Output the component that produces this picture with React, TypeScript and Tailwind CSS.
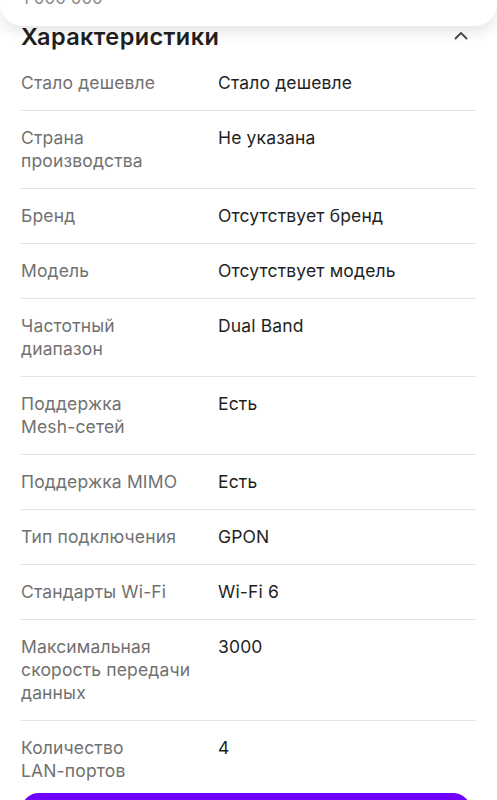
import React from "react"

const rows: [string[], string][] = [
  [["Стало дешевле"], "Стало дешевле"],
  [["Страна", "производства"], "Не указана"],
  [["Бренд"], "Отсутствует бренд"],
  [["Модель"], "Отсутствует модель"],
  [["Частотный", "диапазон"], "Dual Band"],
  [["Поддержка", "Mesh-сетей"], "Есть"],
  [["Поддержка MIMO"], "Есть"],
  [["Тип подключения"], "GPON"],
  [["Стандарты Wi-Fi"], "Wi-Fi 6"],
  [["Максимальная", "скорость передачи", "данных"], "3000"],
  [["Количество", "LAN-портов"], "4"],
]

function Chevron() {
  return (
    <svg width="14" height="9" viewBox="0 0 14 9" fill="none">
      <path d="M1.5 7.5L7 2l5.5 5.5" stroke="#4a4a4a" strokeWidth="1.8" strokeLinecap="round" strokeLinejoin="round" />
    </svg>
  )
}

export default function App() {
  return (
    <div className="w-[497px] h-[800px] overflow-hidden bg-white text-[#1f1f1f]" style={{ fontFamily: "Inter, 'Noto Sans', sans-serif" }}>
      {/* верхняя карточка, почти вся ушла за край */}
      <div className="h-[26px] rounded-b-[22px] bg-white shadow-[0_6px_14px_rgba(0,0,0,0.10)] overflow-hidden relative z-10">
        <div className="-mt-[12px] pl-[22px] text-[17px] leading-[20px] text-[#8a8a8a]">1 000 000</div>
      </div>

      <div className="px-[21px]">
        <div className="flex items-center justify-between h-[30px]">
          <h2 className="text-[23.5px] font-semibold leading-[26px] tracking-[0.4px] -mt-[9px]">Характеристики</h2>
          <div className="mr-[8px] -mt-[11px]">
            <Chevron />
          </div>
        </div>

        <div className="w-[455px]">
          {rows.map(([k, v], i) => {
            const last = i === rows.length - 1
            return (
              <div
                key={i}
                className={
                  "grid grid-cols-[197px_1fr] pt-[15px] text-[17.5px] leading-[23px] tracking-[0.15px] " +
                  (last ? "pb-[11px]" : "pb-[16px] border-b border-[#e3e3e3]")
                }
              >
                <div className="text-[#717171] whitespace-nowrap">
                  {k.map((line, j) => (
                    <div key={j}>{line}</div>
                  ))}
                </div>
                <div className="text-[#1f1f1f]">{v}</div>
              </div>
            )
          })}
        </div>

        <div className="h-[48px] w-[450px] rounded-[18px] bg-[#7000ff]" />
      </div>
    </div>
  )
}
